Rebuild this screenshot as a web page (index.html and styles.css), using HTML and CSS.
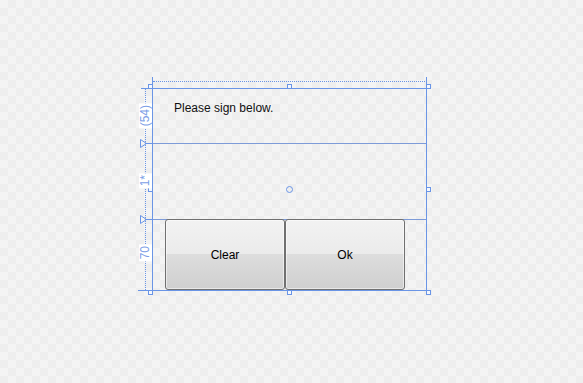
FILE: index.html
```html
<!DOCTYPE html>
<html lang="en">
<head>
  <meta charset="UTF-8">
  <title>Signature pad - designer</title>
  <link rel="stylesheet" href="styles.css">
</head>
<body class="canvas">

  <div class="designer">

    <div class="corner"></div>
    <div class="top-strip"><div class="top-guide"></div></div>

    <div class="ruler">
      <div class="ruler-seg is-first"><span class="ruler-label">(54)</span></div>
      <div class="ruler-seg is-mid">
        <svg class="ruler-mark" width="8" height="9" viewBox="0 0 8 9"><path d="M0.5 0.5 L6.5 4.5 L0.5 8.5 Z" fill="none" stroke="#6a95e6"/></svg>
        <span class="ruler-label">1*</span>
      </div>
      <div class="ruler-seg is-last">
        <svg class="ruler-mark" width="8" height="9" viewBox="0 0 8 9"><path d="M0.5 0.5 L6.5 4.5 L0.5 8.5 Z" fill="none" stroke="#6a95e6"/></svg>
        <span class="ruler-label">70</span>
      </div>
    </div>

    <div class="form">
      <div class="row row-prompt">
        <p class="prompt">Please sign below.</p>
      </div>
      <div class="row row-pad"></div>
      <div class="row row-actions">
        <button type="button" class="button">Clear</button>
        <button type="button" class="button">Ok</button>
      </div>
    </div>

    <!-- selection adorners -->
    <span class="handle is-tl"></span>
    <span class="handle is-tm"></span>
    <span class="handle is-tr"></span>
    <span class="handle is-ml"></span>
    <span class="handle is-mr"></span>
    <span class="handle is-bl"></span>
    <span class="handle is-bm"></span>
    <span class="handle is-br"></span>
    <span class="origin"></span>

  </div>

</body>
</html>
```

FILE: styles.css
```css
html, body {
  height: 100%;
}
body {
  margin: 0;
}
.canvas {
  background-color: #f4f4f4;
  background-image: conic-gradient(#eeeeee 25%, transparent 0 50%, #eeeeee 0 75%, transparent 0);
  background-size: 16px 16px;
  font-family: "Liberation Sans", Arial, sans-serif;
  overflow: hidden;
}

/* designer surface */
.designer {
  position: absolute;
  left: 138px;
  top: 77px;
  display: grid;
  grid-template-columns: 14px 275px;
  grid-template-rows: 11px 203px;
}
.top-strip {
  border-left: 1px solid #6a95e6;
  border-right: 1px solid #6a95e6;
}
.top-guide {
  margin: 4px 1px 0 0;
  border-top: 1px dotted #6a95e6;
}

/* row ruler */
.ruler {
  position: relative;
  display: flex;
  flex-direction: column;
  border-bottom: 1px solid #6a95e6;
}
.ruler::after {
  content: "";
  position: absolute;
  top: 0;
  bottom: 0;
  left: 7px;
  border-left: 1px dotted #6a95e6;
}
.ruler-seg {
  position: relative;
  display: flex;
  justify-content: center;
  align-items: center;
}
.ruler-seg::before {
  content: "";
  position: absolute;
  top: 0;
  left: 3px;
  right: 0;
  border-top: 1px solid #6a95e6;
}
.ruler-seg.is-first { height: 55px; }
.ruler-seg.is-mid   { height: 76px; }
.ruler-seg.is-last  { height: 71px; }
.ruler-seg.is-mid::before,
.ruler-seg.is-last::before {
  left: 8px;
}
.ruler-mark {
  position: absolute;
  z-index: 2;
  top: -4px;
  left: 2px;
}
.ruler-label {
  position: relative;
  z-index: 1;
  writing-mode: vertical-rl;
  transform: rotate(180deg);
  width: 13px;
  padding: 2px 0;
  background: #fff;
  color: #7c9ee6;
  font-size: 12px;
  line-height: 13px;
  text-align: center;
  margin-left: 1px;
}
.ruler-seg.is-last .ruler-label {
  margin-top: -4px;
}

/* the form itself */
.form {
  display: grid;
  grid-template-rows: 55px 76px 70px;
  border: 1px solid #6a95e6;
}
.row {
  box-sizing: border-box;
}
.row-prompt,
.row-pad {
  border-bottom: 1px solid #7d9bd8;
}
.prompt {
  margin: 0;
  padding: 11px 0 0 21px;
  font-size: 12px;
  line-height: 16px;
  color: #111;
}
.row-actions {
  display: flex;
  padding-left: 12px;
}
.button {
  box-sizing: border-box;
  width: 120px;
  height: 71px;
  margin-top: -1px;
  border: 1px solid #707070;
  border-radius: 3px;
  padding: 0;
  font-family: "Liberation Sans", Arial, sans-serif;
  font-size: 12px;
  color: #000;
  background: linear-gradient(#f2f2f2, #ebebeb 50%, #dddddd 50%, #cfcfcf);
  box-shadow: inset 0 0 0 1px rgba(255, 255, 255, 0.5);
}

/* adorners */
.handle {
  position: absolute;
  box-sizing: border-box;
  width: 5px;
  height: 5px;
  border: 1px solid #6a95e6;
  background: #f4f7fd;
}
.handle.is-tl { left: 10px;  top: 7px; }
.handle.is-tm { left: 149px; top: 7px; }
.handle.is-tr { left: 288px; top: 7px; }
.handle.is-ml { left: 10px;  top: 110px; }
.handle.is-mr { left: 288px; top: 110px; }
.handle.is-bl { left: 10px;  top: 213px; }
.handle.is-bm { left: 149px; top: 213px; }
.handle.is-br { left: 288px; top: 213px; }
.origin {
  position: absolute;
  box-sizing: border-box;
  left: 148px;
  top: 109px;
  width: 7px;
  height: 7px;
  border: 1px solid #6a95e6;
  border-radius: 50%;
}
```
